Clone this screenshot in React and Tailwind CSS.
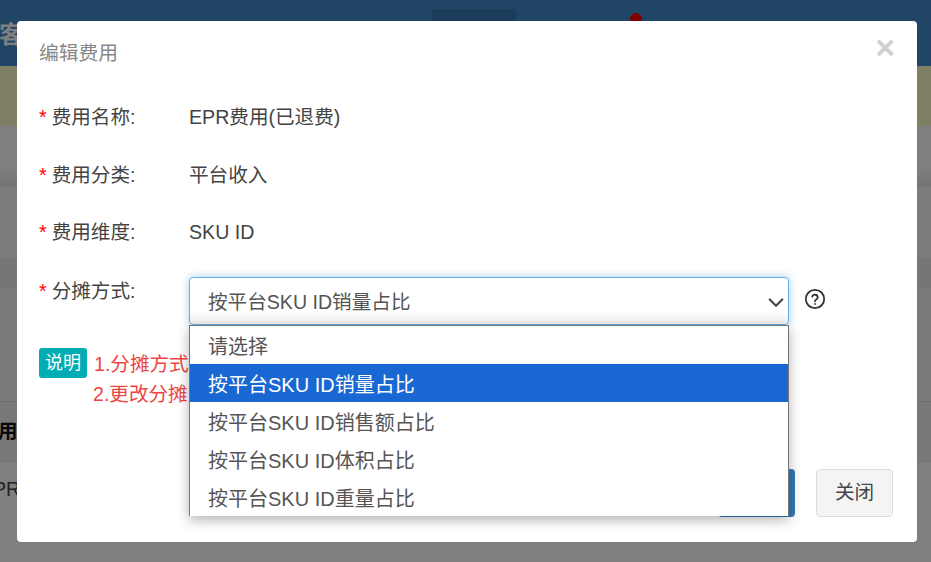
import React from "react";

const font = { fontFamily: '"Liberation Sans", "Noto Sans CJK SC", sans-serif' };

function Row({ label, children }) {
  return (
    <div className="flex h-[57.5px] items-center">
      <div className="w-[150px] shrink-0 text-[#444]">
        <span className="mr-[5px] text-[#f00]">*</span>
        {label}
      </div>
      {children}
    </div>
  );
}

const options = ["请选择", "按平台SKU ID销量占比", "按平台SKU ID销售额占比", "按平台SKU ID体积占比", "按平台SKU ID重量占比"];

export default function App() {
  return (
    <div style={font} className="relative h-[562px] w-[931px] overflow-hidden bg-white text-[19.6px] text-[#333]">
      {/* page behind the dialog */}
      <div className="flex h-[66px] bg-[#428bca]">
        <div className="w-[432px] pt-[17px] text-[24px] font-bold leading-[36px] text-white">
          <span className="-ml-[1px]">客</span>
        </div>
        <div className="mt-[9px] h-[57px] w-[84px] rounded-t bg-[#367ab5]" />
        <div className="ml-[114px] mt-[13px] h-3 w-3 rounded-full bg-[#f00]" />
      </div>
      <div className="h-[60px] bg-[#ffffcc]" />
      <div className="h-[60px] border-b border-[#e0e0e0] bg-gradient-to-b from-white from-70% to-[#ececec]" />
      <div className="h-[72px] bg-[#f8f8f8]" />
      <div className="h-[29px] border-b border-[#e4e4e4] bg-[#ececec]" />
      <div className="h-[115px] border-b border-[#e0e0e0] bg-[#f5f5f5]" />
      <div className="flex h-[60px] items-center border-b border-[#e4e4e4] bg-[#f0f0f0] font-bold text-[#111]">
        <span className="-ml-[2px]">用</span>
      </div>
      <div className="flex h-[56px] items-center">
        <span className="-ml-[7px] text-[#444]">PR</span>
      </div>

      {/* dim layer */}
      <div className="absolute inset-0 bg-black/50" />

      {/* dialog */}
      <div className="absolute left-[17px] top-[21px] flex h-[521px] w-[900px] flex-col rounded-[4px] bg-white px-[22px] text-[#444]">
        <div className="flex h-[62px] items-center justify-between">
          <h4 className="pt-[3px] text-[19.8px] font-normal text-[#888]">编辑费用</h4>
          <span className="-mt-[11px] text-[34px] font-bold leading-none text-[#d0d0d0]">×</span>
        </div>

        <div className="mt-[6px]">
          <Row label="费用名称:">
            <span>EPR费用(已退费)</span>
          </Row>
          <Row label="费用分类:">
            <span>平台收入</span>
          </Row>
          <Row label="费用维度:">
            <span>SKU ID</span>
          </Row>
          <div className="flex items-start pt-[15.5px]">
            <div className="w-[150px] shrink-0 pt-[2px] leading-[24px] text-[#444]">
              <span className="mr-[5px] text-[#f00]">*</span>
              分摊方式:
            </div>
            <div className="relative w-[600px]">
              <div className="flex h-[48px] items-center justify-between rounded-[4px] border border-[#66afe9] bg-gradient-to-b from-white from-70% to-[#f0f0f0] pl-[18px] pr-[2px] text-[#555] shadow-[0_0_8px_rgba(102,175,233,0.6)]">
                <span className="pt-[3px]">按平台SKU ID销量占比</span>
                <svg className="mt-[2px]" width="20" height="20" viewBox="0 0 16 16" fill="none" stroke="#444" strokeWidth="1.7" strokeLinecap="round" strokeLinejoin="round">
                  <path d="M3 6l5 5 5-5" />
                </svg>
              </div>
              <ul className="absolute left-0 top-[48px] z-10 w-[600px] border border-b-0 border-[#767676] bg-white text-[20px] text-[#555] shadow-[0_4px_12px_rgba(0,0,0,0.3)]">
                {options.map((o, i) => (
                  <li key={o} className={`flex h-[38px] items-center pl-[18px] pt-[3px] ${i === 1 ? "bg-[#1967d2] text-white" : ""}`}>
                    {o}
                  </li>
                ))}
              </ul>
            </div>
            <svg className="ml-[15px] mt-[11px]" width="22" height="22" viewBox="0 0 22 22" fill="none" stroke="#333" strokeWidth="1.8" strokeLinecap="round">
              <circle cx="11" cy="11" r="9.2" />
              <path d="M8.2 8.6a2.9 2.9 0 0 1 5.6.7c0 1.9-2.8 2.2-2.8 4" />
              <path d="M11 15.9v.1" />
            </svg>
          </div>
          <div className="mt-[23px] flex items-start">
            <span className="flex h-[30px] w-[48px] items-center justify-center rounded-[3px] bg-[#00adb5] text-[18px] text-white">说明</span>
            <div className="ml-[7px] pt-px leading-[30px] text-[#ef4444]">
              <div>1.分摊方式修改</div>
              <div className="-ml-px">2.更改分摊方式</div>
            </div>
          </div>
        </div>

        <div className="mt-auto mb-[25px] flex justify-end gap-[21px] pr-[2px]">
          <button className="h-[48px] w-[77px] rounded-[4px] bg-[#337ab7] text-white">保存</button>
          <button className="h-[48px] w-[77px] rounded-[4px] border border-[#ddd] bg-[#f4f4f4] text-[#444]">关闭</button>
        </div>
      </div>
    </div>
  );
}
